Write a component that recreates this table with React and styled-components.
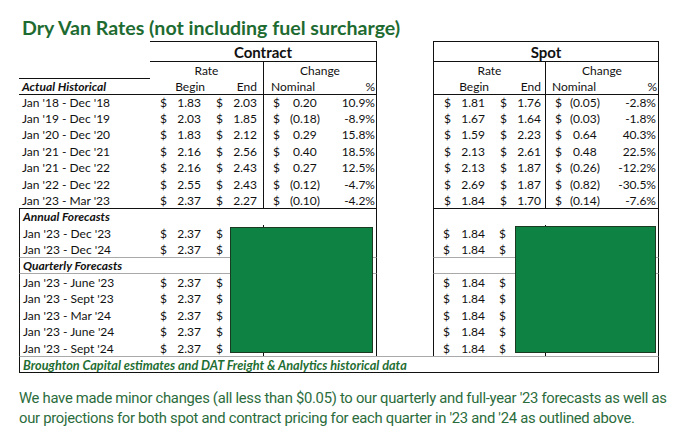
import React from 'react';
import styled, { createGlobalStyle } from 'styled-components';

const GlobalStyle = createGlobalStyle`
  html, body {
    margin: 0;
    padding: 0;
    background: #fff;
  }
  body {
    font-family: Lato, "Open Sans", sans-serif;
    color: #111;
  }
`;

const Page = styled.div`
  width: 680px;
  height: 439px;
  box-sizing: border-box;
  padding: 15px 0 0 19px;
  overflow: hidden;
`;

const Title = styled.h1`
  margin: 0 0 0 3px;
  height: 26px;
  font-size: 19.6px;
  line-height: 26px;
  font-weight: 700;
  color: #1e6b31;
  white-space: nowrap;
`;

const Sheet = styled.div`
  position: relative;
  width: 640px;
  font-size: 12px;
`;

const Row = styled.div`
  display: grid;
  grid-template-columns: 131px 113px 114px 56px 113px 113px;
  height: ${(p) => p.$h || 16.4}px;
  --rule: ${(p) =>
    p.$rule === 'black' ? '1px solid #111' : p.$rule === 'gray' ? '1px solid #a9a9a9' : 'none'};
`;

const Label = styled.div`
  box-sizing: border-box;
  padding-left: 3px;
  display: flex;
  align-items: center;
  white-space: nowrap;
  border-bottom: var(--rule);
  border-top: ${(p) => (p.$top ? '1px solid #111' : 'none')};
  border-left: ${(p) => (p.$edge ? '1px solid #111' : 'none')};
  font-weight: ${(p) => (p.$head ? 700 : 400)};
  font-style: ${(p) => (p.$head ? 'italic' : 'normal')};
`;

const Group = styled.div`
  box-sizing: border-box;
  display: grid;
  grid-template-columns: ${(p) => p.$cols};
  align-items: center;
  border-bottom: var(--rule);
  border-left: ${(p) => (p.$left ? '1px solid #111' : 'none')};
  border-right: ${(p) => (p.$right ? '1px solid #111' : 'none')};
`;

const Gap = styled.div``;

const Banner = styled.div`
  grid-column: span 2;
  box-sizing: border-box;
  display: flex;
  align-items: center;
  justify-content: center;
  font-size: 15px;
  font-weight: 700;
  border-top: 1px solid #111;
  border-bottom: 1px solid #111;
  border-right: 1px solid #111;
  border-left: ${(p) => (p.$left ? '1px solid #111' : 'none')};
`;

const Caption = styled.div`
  grid-column: ${(p) => p.$span || 'auto'};
  text-align: ${(p) => p.$align || 'center'};
  padding-right: ${(p) => p.$pr || 0}px;
  white-space: nowrap;
`;

const Dollar = styled.span`
  padding-left: ${(p) => p.$pl}px;
`;

const Num = styled.span`
  text-align: right;
  padding-right: ${(p) => p.$pr}px;
  white-space: nowrap;
`;

const Ghost = styled.span`
  visibility: hidden;
`;

const Footer = styled.div`
  box-sizing: border-box;
  height: 17px;
  padding-left: 3px;
  display: flex;
  align-items: center;
  border: 1px solid #111;
  border-top-color: #a9a9a9;
  color: #1f6e33;
  font-size: 12.7px;
  font-weight: 700;
  font-style: italic;
  white-space: nowrap;
`;

const Cover = styled.div`
  position: absolute;
  left: ${(p) => p.$x}px;
  top: ${(p) => p.$y}px;
  width: ${(p) => p.$w}px;
  height: ${(p) => p.$h}px;
  box-sizing: border-box;
  background: #0d8242;
  border: 1px solid #1a3b22;
`;

const Note = styled.p`
  margin: 15px 0 0 0;
  width: 661px;
  font-family: Roboto, "Liberation Sans", sans-serif;
  font-size: 14.8px;
  line-height: 20px;
  letter-spacing: -0.28px;
  color: #2b6c3c;
  white-space: nowrap;
`;

const RATE = '18px 37px 17px 41px';
const CHANGE_C = '19px 39px 56px';
const CHANGE_S = '19px 37px 57px';

const contract = [
  ["Jan '18 - Dec '18", '1.83', '2.03', '0.20', '10.9%'],
  ["Jan '19 - Dec '19", '2.03', '1.85', '(0.18)', '-8.9%'],
  ["Jan '20 - Dec '20", '1.83', '2.12', '0.29', '15.8%'],
  ["Jan '21 - Dec '21", '2.16', '2.56', '0.40', '18.5%'],
  ["Jan '21 - Dec '22", '2.16', '2.43', '0.27', '12.5%'],
  ["Jan '22 - Dec '22", '2.55', '2.43', '(0.12)', '-4.7%'],
  ["Jan '23 - Mar '23", '2.37', '2.27', '(0.10)', '-4.2%'],
];

const spot = [
  ['1.81', '1.76', '(0.05)', '-2.8%'],
  ['1.67', '1.64', '(0.03)', '-1.8%'],
  ['1.59', '2.23', '0.64', '40.3%'],
  ['2.13', '2.61', '0.48', '22.5%'],
  ['2.13', '1.87', '(0.26)', '-12.2%'],
  ['2.69', '1.87', '(0.82)', '-30.5%'],
  ['1.84', '1.70', '(0.14)', '-7.6%'],
];

const annual = ["Jan '23 - Dec '23", "Jan '23 - Dec '24"];
const quarterly = [
  "Jan '23 - June '23",
  "Jan '23 - Sept '23",
  "Jan '23 - Mar '24",
  "Jan '23 - June '24",
  "Jan '23 - Sept '24",
];

function Nominal({ value, pr }) {
  const neg = value.startsWith('(');
  return (
    <Num $pr={pr}>
      {value}
      {!neg && <Ghost>)</Ghost>}
    </Num>
  );
}

function RateCells({ begin, end }) {
  return (
    <>
      <Dollar $pl={10}>$</Dollar>
      <Num $pr={4}>{begin}</Num>
      <Dollar $pl={11}>$</Dollar>
      <Num $pr={6}>{end}</Num>
    </>
  );
}

function ChangeCells({ nominal, pct, pr }) {
  return (
    <>
      <Dollar $pl={9}>$</Dollar>
      <Nominal value={nominal} pr={pr} />
      <Num $pr={3}>{pct}</Num>
    </>
  );
}

function SectionRow({ title, rule }) {
  return (
    <Row $rule={rule}>
      <Label $head $edge>
        {title}
      </Label>
      <Group $cols={RATE} />
      <Group $cols={CHANGE_C} $right />
      <Gap />
      <Group $cols={RATE} $left />
      <Group $cols={CHANGE_S} $right />
    </Row>
  );
}

function ForecastRow({ label, rule }) {
  return (
    <Row $rule={rule}>
      <Label $edge>{label}</Label>
      <Group $cols={RATE}>
        <Dollar $pl={10}>$</Dollar>
        <Num $pr={4}>2.37</Num>
        <Dollar $pl={11}>$</Dollar>
      </Group>
      <Group $cols={CHANGE_C} $left $right />
      <Gap />
      <Group $cols={RATE} $left $right>
        <Dollar $pl={9}>$</Dollar>
        <Num $pr={4}>1.84</Num>
        <Dollar $pl={10}>$</Dollar>
      </Group>
      <Group $cols={CHANGE_S} $right />
    </Row>
  );
}

export default function App() {
  return (
    <Page>
      <GlobalStyle />
      <Title>Dry Van Rates (not including fuel surcharge)</Title>
      <Sheet>
        <Row $h={21}>
          <Label />
          <Banner>Contract</Banner>
          <Gap />
          <Banner $left>Spot</Banner>
        </Row>
        <Row $h={16}>
          <Label />
          <Group $cols="1fr">
            <Caption>Rate</Caption>
          </Group>
          <Group $cols="1fr" $left $right>
            <Caption>Change</Caption>
          </Group>
          <Gap />
          <Group $cols="1fr" $left $right>
            <Caption>Rate</Caption>
          </Group>
          <Group $cols="1fr" $right>
            <Caption>Change</Caption>
          </Group>
        </Row>
        <Row $h={16} $rule="black">
          <Label $head $top>
            Actual Historical
          </Label>
          <Group $cols={RATE}>
            <Caption $span="span 2" $align="right">
              Begin
            </Caption>
            <Caption $span="span 2" $align="right" $pr={6}>
              End
            </Caption>
          </Group>
          <Group $cols={CHANGE_C} $left $right>
            <Caption $span="span 2">Nominal</Caption>
            <Caption $align="right" $pr={3}>
              %
            </Caption>
          </Group>
          <Gap />
          <Group $cols={RATE} $left $right>
            <Caption $span="span 2" $align="right">
              Begin
            </Caption>
            <Caption $span="span 2" $align="right" $pr={6}>
              End
            </Caption>
          </Group>
          <Group $cols={CHANGE_S} $right>
            <Caption $span="span 2">Nominal</Caption>
            <Caption $align="right" $pr={2}>
              %
            </Caption>
          </Group>
        </Row>
        {contract.map((c, i) => {
          const s = spot[i];
          return (
            <Row key={c[0]} $rule={i === contract.length - 1 ? 'black' : 'none'}>
              <Label>{c[0]}</Label>
              <Group $cols={RATE}>
                <RateCells begin={c[1]} end={c[2]} />
              </Group>
              <Group $cols={CHANGE_C} $left $right>
                <ChangeCells nominal={c[3]} pct={c[4]} pr={2} />
              </Group>
              <Gap />
              <Group $cols={RATE} $left $right>
                <RateCells begin={s[0]} end={s[1]} />
              </Group>
              <Group $cols={CHANGE_S} $right>
                <ChangeCells nominal={s[2]} pct={s[3]} pr={2} />
              </Group>
            </Row>
          );
        })}
        <SectionRow title="Annual Forecasts" />
        {annual.map((a, i) => (
          <ForecastRow key={a} label={a} rule={i === annual.length - 1 ? 'gray' : 'none'} />
        ))}
        <SectionRow title="Quarterly Forecasts" rule="gray" />
        {quarterly.map((q) => (
          <ForecastRow key={q} label={q} />
        ))}
        <Footer>Broughton Capital estimates and DAT Freight &amp; Analytics historical data</Footer>
        <Cover $x={211} $y={186} $w={143} $h={126} />
        <Cover $x={496} $y={185} $w={141} $h={127} />
      </Sheet>
      <Note>
        We have made minor changes (all less than $0.05) to our quarterly and full-year '23 forecasts
        as well as
        <br />
        our projections for both spot and contract pricing for each quarter in '23 and '24 as outlined
        above.
      </Note>
    </Page>
  );
}
